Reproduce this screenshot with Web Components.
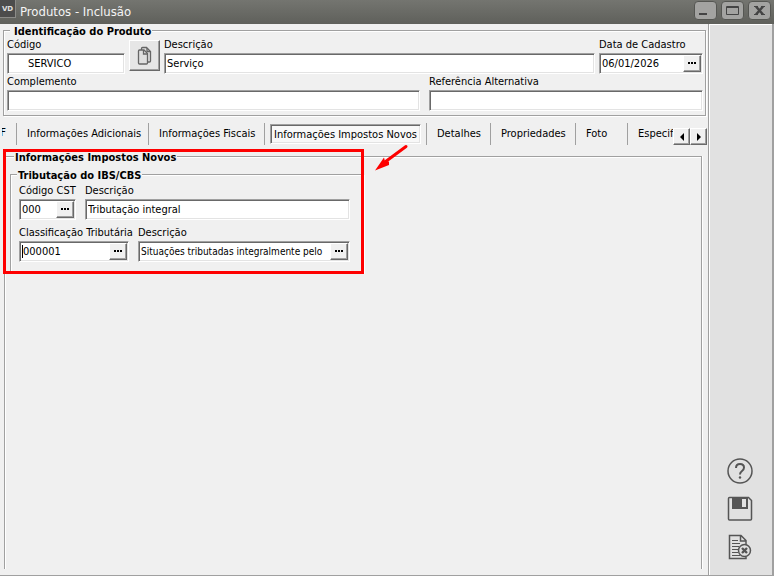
<!DOCTYPE html>
<html lang="pt-BR">
<head>
<meta charset="utf-8">
<title>Produtos - Inclusão</title>
<style>
  body {
    margin: 0;
    background: #f0f0f0;
    color: #000;
    font: 11px/14px "DejaVu Sans Condensed", "DejaVu Sans", sans-serif;
  }
  .row { display: flex; align-items: flex-end; gap: 9px; }
  .head { gap: 4px; }
  .grow { flex: 1; }
  .code { flex: 0 0 118px; }
  .date { flex: 0 0 104px; }
  .alt { flex: 0 0 274px; }
  .cst { flex: 0 0 57px; }
  .class { flex: 0 0 110px; }
  .tax { width: 354px; margin: 0 0 0 5px; }
</style>
</head>
<body>
<app-window>
  <title-bar slot="title">Produtos - Inclusão</title-bar>

  <group-box label="Identificação do Produto" indent>
    <div class="row head">
      <text-field class="code" label="Código" value="SERVICO" indent></text-field>
      <copy-button></copy-button>
      <text-field class="grow" label="Descrição" value="Serviço"></text-field>
      <text-field class="date" label="Data de Cadastro" value="06/01/2026" lookup></text-field>
    </div>
    <div class="row">
      <text-field class="grow" label="Complemento" value=""></text-field>
      <text-field class="alt" label="Referência Alternativa" value=""></text-field>
    </div>
  </group-box>

  <tab-strip></tab-strip>

  <group-box class="panel" label="Informações Impostos Novos" open>
    <group-box class="tax" label="Tributação do IBS/CBS" roomy>
      <div class="row">
        <text-field class="cst" label="Código CST" value="000" lookup></text-field>
        <text-field class="grow" label="Descrição" value="Tributação integral"></text-field>
      </div>
      <div class="row">
        <text-field class="class" label="Classificação Tributária" value="000001" lookup caret></text-field>
        <text-field class="grow" label="Descrição" value="Situações tributadas integralmente pelo" lookup small></text-field>
      </div>
    </group-box>
    <callout-mark></callout-mark>
  </group-box>

  <side-tools slot="tools"></side-tools>
</app-window>

<script>
class AppWindow extends HTMLElement {
  connectedCallback() {
    this.attachShadow({ mode: 'open' });
    this.shadowRoot.innerHTML = `
      <style>
        :host {
          display: flex;
          flex-direction: column;
          min-height: 100vh;
        }
        .body { display: flex; flex: 1; }
        main {
          display: flex;
          flex-direction: column;
          flex: 1;
          min-width: 0;
          box-sizing: border-box;
          padding-bottom: 6px;
          border-bottom: 1px solid #a0a0a0;
        }
        ::slotted(group-box) { margin: 0 2px 0 3px; }
        ::slotted(tab-strip) { margin: 7px 1px 5px 2px; }
        ::slotted(.panel) { flex: 1; margin: 0 6px 0 4px; }
      </style>
      <slot name="title"></slot>
      <div class="body">
        <main><slot></slot></main>
        <slot name="tools"></slot>
      </div>
    `;
  }
}

class TitleBar extends HTMLElement {
  connectedCallback() {
    this.attachShadow({ mode: 'open' });
    this.shadowRoot.innerHTML = `
      <style>
        :host {
          display: flex;
          align-items: flex-start;
          height: 24px;
          background: linear-gradient(#747570, #5f605b);
          color: #f4f4f4;
        }
        .logo {
          box-sizing: border-box;
          width: 16px;
          height: 18px;
          border: 1px solid #8b8b88;
          border-left: 0;
          border-top: 0;
          background: #4c4c4c;
          color: #e0e0e0;
          font: bold 7px/18px "DejaVu Sans", sans-serif;
          text-align: center;
        }
        h1 {
          flex: 1;
          margin: 0 0 0 4px;
          font-size: 13px;
          font-weight: normal;
          line-height: 23px;
        }
        .controls { display: flex; gap: 4px; padding: 1px 3px 0 0; }
        button {
          width: 23px;
          height: 19px;
          padding: 0;
          border: 1px solid #555652;
          border-radius: 4px;
          background: #a3a3a1;
        }
        svg { display: block; }
      </style>
      <span class="logo">VD</span>
      <h1><slot></slot></h1>
      <div class="controls">
        <button aria-label="Minimizar"><svg width="21" height="17"><path d="M4 12h8" stroke="#444" stroke-width="2"/></svg></button>
        <button aria-label="Maximizar"><svg width="21" height="17"><path d="M4.500 4.500h12v8h-12zM4 5.500h13" fill="none" stroke="#444"/></svg></button>
        <button aria-label="Fechar"><svg width="21" height="17"><path d="M7 4.500l7 8M14 4.500l-7 8" stroke="#444" stroke-width="2.500"/><path d="M5 4.500h4M12 4.500h4M5 12.500h4M12 12.500h4" stroke="#444"/></svg></button>
      </div>
    `;
  }
}

class GroupBox extends HTMLElement {
  connectedCallback() {
    this.attachShadow({ mode: 'open' });
    this.shadowRoot.innerHTML = `
      <style>
        :host { display: block; position: relative; }
        :host([open]) { display: flex; }
        fieldset {
          display: flex;
          flex-direction: column;
          gap: 1px;
          min-width: 0;
          flex: 1;
          margin: 0;
          padding: 2px 2px 4px 3px;
          border: 1px solid #a0a0a0;
          box-shadow: 1px 1px #fff, inset 1px 1px #fff;
        }
        legend {
          margin-left: 3px;
          padding: 4px 1px 0;
          background: #f0f0f0;
          font-weight: bold;
          line-height: 8px;
        }
        :host([indent]) legend { padding-left: 4px; }
        :host([open]) fieldset {
          padding: 6px 0 0;
          border-bottom: 0;
          box-shadow: 1px 0 #fff, inset 1px 1px #fff;
        }
        :host([open]) legend { margin-left: 9px; }
        :host([roomy]) fieldset { gap: 6px; padding: 4px 13px 10px 8px; }
        :host([roomy]) legend { margin-left: -2px; }
      </style>
      <fieldset>
        <legend>${this.getAttribute('label')}</legend>
        <slot></slot>
      </fieldset>
    `;
  }
}

class TextField extends HTMLElement {
  connectedCallback() {
    const lookup = this.hasAttribute('lookup')
      ? '<button aria-label="Pesquisar"><svg width="8" height="2"><path d="M0 1h2M3 1h2M6 1h2" stroke="#000" stroke-width="2"/></svg></button>'
      : '';
    this.attachShadow({ mode: 'open' });
    this.shadowRoot.innerHTML = `
      <style>
        :host { display: block; min-width: 0; }
        label { display: block; margin-bottom: 1px; white-space: nowrap; }
        .box {
          display: flex;
          box-sizing: border-box;
          height: 21px;
          border: 1px solid;
          border-color: #a0a0a0 #fff #fff #a0a0a0;
          background: #fff;
          box-shadow: inset 1px 1px #696969, inset -1px -1px #e3e3e3;
        }
        input {
          flex: 1;
          min-width: 0;
          padding: 0 0 0 2px;
          border: 0;
          outline: 0;
          background: none;
          color: inherit;
          font: inherit;
        }
        :host([indent]) input { padding-left: 20px; }
        :host([small]) input { font-size: 10px; }
        :host([caret]) .box::before {
          content: "";
          width: 1px;
          margin: 3px -2px 3px 2px;
          background: #000;
        }
        button {
          width: 18px;
          margin: 1px;
          padding: 0 0 2px;
          border: 1px solid;
          border-color: #fff #696969 #696969 #fff;
          background: #f0f0f0;
          box-shadow: inset -1px -1px #a0a0a0;
        }
        button svg { display: block; margin: auto; }
      </style>
      <label for="field">${this.getAttribute('label')}</label>
      <div class="box">
        <input id="field" value="${this.getAttribute('value')}">${lookup}
      </div>
    `;
  }
}

class CopyButton extends HTMLElement {
  connectedCallback() {
    this.attachShadow({ mode: 'open' });
    this.shadowRoot.innerHTML = `
      <style>
        :host { display: block; }
        button {
          width: 31px;
          height: 31px;
          padding: 0;
          border: 1px solid;
          border-color: #fff #696969 #696969 #fff;
          background: #e6e6e6;
          box-shadow: inset -1px -1px #a0a0a0;
        }
        svg { display: block; margin: auto; }
      </style>
      <button aria-label="Copiar produto">
        <svg width="16" height="20" fill="#e0e0e0" stroke="#666" stroke-width="1.300">
          <path d="M4.500 2.500q0-1 1-1h4l4 4v9.500q0 1-1 1h-8z"/>
          <path d="M1.500 5q0-1 1-1h4.500l3.500 3.500v9.500q0 1-1 1h-7q-1 0-1-1z"/>
          <path d="M6.500 4v4h4M10 2v3.500h3" fill="none"/>
        </svg>
      </button>
    `;
  }
}

class TabStrip extends HTMLElement {
  connectedCallback() {
    this.attachShadow({ mode: 'open' });
    this.shadowRoot.innerHTML = `
      <style>
        :host { display: flex; align-items: flex-end; height: 22px; }
        .tabs { display: flex; flex: 1; min-width: 0; height: 22px; overflow: hidden; }
        .tab {
          flex: none;
          box-sizing: border-box;
          width: var(--w);
          padding: 0 0 0 10px;
          border: 0;
          border-right: 1px solid #a0a0a0;
          background: none;
          color: inherit;
          font: inherit;
          line-height: 20px;
          text-align: left;
          white-space: nowrap;
        }
        .cut { display: flex; justify-content: flex-end; padding: 0 10px 0 0; }
        .active { padding: 0 5px; }
        .active span {
          display: block;
          box-sizing: border-box;
          height: 20px;
          border: 1px solid;
          border-color: #a0a0a0 #fff #fff #a0a0a0;
          background: #f8f8f8;
          box-shadow: inset 1px 1px #696969, inset -1px -1px #e3e3e3;
          text-align: center;
        }
        .arrow {
          width: 17px;
          height: 17px;
          padding: 0;
          border: 1px solid;
          border-color: #fff #696969 #696969 #fff;
          background: #f0f0f0;
          box-shadow: inset -1px -1px #a0a0a0;
        }
        .arrow svg { display: block; margin: auto; }
      </style>
      <div class="tabs" role="tablist">
        <button class="tab cut" role="tab" style="--w: 15px">F</button>
        <button class="tab" role="tab" style="--w: 132px">Informações Adicionais</button>
        <button class="tab" role="tab" style="--w: 116px">Informações Fiscais</button>
        <button class="tab active" role="tab" aria-selected="true" style="--w: 162px"><span>Informações Impostos Novos</span></button>
        <button class="tab" role="tab" style="--w: 64px">Detalhes</button>
        <button class="tab" role="tab" style="--w: 85px">Propriedades</button>
        <button class="tab" role="tab" style="--w: 52px">Foto</button>
        <button class="tab" role="tab" style="--w: 90px">Especif</button>
      </div>
      <button class="arrow" aria-label="Abas anteriores"><svg width="4" height="8"><path d="M4 0v8l-4-4z"/></svg></button>
      <button class="arrow" aria-label="Próximas abas"><svg width="4" height="8"><path d="M0 0v8l4-4z"/></svg></button>
    `;
  }
}

// red frame and arrow laid over the tax group
class CalloutMark extends HTMLElement {
  connectedCallback() {
    this.attachShadow({ mode: 'open' });
    this.shadowRoot.innerHTML = `
      <style>
        :host {
          position: absolute;
          top: -1px;
          left: -1px;
          box-sizing: border-box;
          width: 361px;
          height: 125px;
          border: 3px solid #fe0000;
          pointer-events: none;
        }
        svg { position: absolute; left: 100%; top: -8px; }
      </style>
      <svg width="48" height="32" fill="#fe0000">
        <path d="M45 2.500L24 18" stroke="#fe0000" stroke-width="3" stroke-linecap="round"/>
        <path d="M14 26.500l9-13 1 4 4 0 0 3.500z"/>
      </svg>
    `;
  }
}

class SideTools extends HTMLElement {
  connectedCallback() {
    this.attachShadow({ mode: 'open' });
    this.shadowRoot.innerHTML = `
      <style>
        :host {
          display: flex;
          flex-direction: column;
          justify-content: flex-end;
          align-items: center;
          gap: 10px;
          box-sizing: border-box;
          width: 66px;
          padding: 0 2px 14px 0;
          border: 1px solid #a0a0a0;
          border-width: 0 2px 1px 1px;
          background: #e1e1e1;
          box-shadow: inset 1px 1px #fff;
        }
        button {
          width: 28px;
          height: 28px;
          padding: 0;
          border: 0;
          background: none;
        }
        svg { display: block; fill: none; stroke: #555; stroke-width: 1.5; }
      </style>
      <button aria-label="Ajuda">
        <svg width="28" height="28">
          <circle cx="14" cy="14" r="12"/>
          <path d="M10 11q0-4 4-4t4 3.500q0 2-2 3.500t-2 3.500" stroke-width="2"/>
          <circle cx="14" cy="20.500" r="1.200" fill="#555" stroke="none"/>
        </svg>
      </button>
      <button aria-label="Salvar">
        <svg width="28" height="28">
          <path d="M3.500 2.500h19l3 3v18.500q0 1-1 1h-21q-1 0-1-1v-20.500q0-1 1-1z"/>
          <path d="M6 2h16v12h-16z" fill="#555" stroke="none"/>
          <path d="M16 4h4v8h-4z" fill="#e1e1e1" stroke="none"/>
        </svg>
      </button>
      <button aria-label="Cancelar">
        <svg width="28" height="28">
          <path d="M20 12v-4.500l-5-5h-11.500v23h16.500v-2M14.500 3v5h5"/>
          <path d="M6 7.500h6M6 10.500h8M6 13.500h7M6 16.500h6M6 19.500h6M6 22.500h8" stroke-width="1.200"/>
          <circle cx="18.500" cy="17.500" r="6" fill="#e1e1e1"/>
          <path d="M16 15l5 5M21 15l-5 5" stroke-width="2.400"/>
        </svg>
      </button>
    `;
  }
}

customElements.define('app-window', AppWindow);
customElements.define('title-bar', TitleBar);
customElements.define('group-box', GroupBox);
customElements.define('text-field', TextField);
customElements.define('copy-button', CopyButton);
customElements.define('tab-strip', TabStrip);
customElements.define('callout-mark', CalloutMark);
customElements.define('side-tools', SideTools);
</script>
</body>
</html>
